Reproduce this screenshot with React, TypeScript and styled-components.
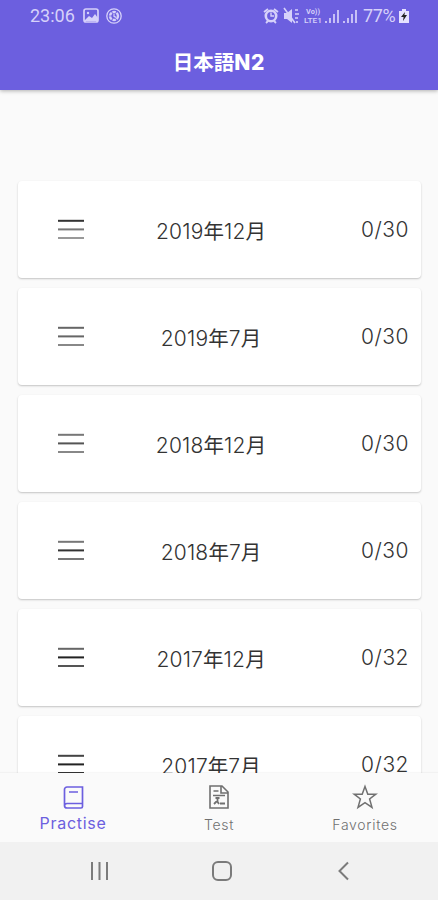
import React from "react";
import styled, { createGlobalStyle } from "styled-components";

const Global = createGlobalStyle`
  * { box-sizing: border-box; }
  body { margin: 0; background: #fafafa; }
`;
const Screen = styled.div`
  width: 438px;
  height: 900px;
  overflow: hidden;
  display: flex;
  flex-direction: column;
  background: #fafafa;
  font-family: Inter, "Noto Sans CJK JP", sans-serif;
`;
const Top = styled.header`
  flex: 0 0 90px;
  background: #6c5fdf;
  color: #fff;
  box-shadow: 0 1px 4px rgba(0, 0, 0, 0.3);
`;
const StatusBar = styled.div`
  height: 32px;
  padding: 0 29px 0 30px;
  display: flex;
  align-items: center;
  color: #d6d1fa;
  font: 18px/32px Roboto, sans-serif;
`;
const Clock = styled.span`
  width: 53px;
`;
const Battery = styled.span`
  width: 36px;
  margin-left: 3px;
  font-size: 18px;
  font-weight: 400;
  letter-spacing: -0.4px;
`;
const Spacer = styled.div`
  flex: 1;
`;
const Title = styled.h1`
  margin: 0;
  height: 58px;
  padding-top: 4px;
  display: flex;
  align-items: center;
  justify-content: center;
  font-size: 20.5px;
  font-weight: 700;
  line-height: 54px;
`;
const TitleLatin = styled.span`
  font-size: 21px;
  font-weight: 800;
  letter-spacing: 0.8px;
`;
const List = styled.main`
  flex: 1;
  min-height: 0;
  overflow: hidden;
  padding: 91px 17px 0 18px;
  display: flex;
  flex-direction: column;
  gap: 10px;
`;
const Card = styled.article`
  flex: 0 0 97px;
  display: grid;
  grid-template-columns: 40px 26px 1fr;
  align-items: center;
  background: #fff;
  border-radius: 4px;
  box-shadow: 0 1px 2px rgba(0, 0, 0, 0.22);
  color: #333;
`;
const MenuIcon = styled.svg`
  grid-column: 2;
  width: 26px;
  height: 22px;
`;
const Content = styled.div`
  display: grid;
  grid-template-columns: 254px 1fr;
  align-items: center;
`;
const Label = styled.span`
  display: flex;
  justify-content: center;
  align-items: baseline;
  padding-top: 2px;
  font-size: 20px;
  line-height: 28px;
`;
const Digits = styled.span`
  font-size: 21px;
  font-weight: 300;
  letter-spacing: 0.2px;
`;
const Kanji = styled.span`
  font-family: "Noto Sans CJK JP", sans-serif;
  font-size: 20.5px;
  font-weight: 400;
`;
const Score = styled.span`
  padding-right: 12px;
  text-align: right;
  white-space: nowrap;
  font-size: 21px;
  font-weight: 300;
  letter-spacing: 0.5px;
  line-height: 28px;
`;
const Tabs = styled.nav`
  flex: 0 0 69px;
  display: grid;
  grid-template-columns: repeat(3, 1fr);
  background: #fafafa;
  box-shadow: 0 -1px 1px rgba(0, 0, 0, 0.03);
`;
const Tab = styled.div<{ $active?: boolean }>`
  display: flex;
  flex-direction: column;
  align-items: center;
  padding-top: 11px;
  color: ${(p) => (p.$active ? "#6c5fdf" : "#707070")};
  font-size: ${(p) => (p.$active ? "16px" : "14px")};
  font-weight: ${(p) => (p.$active ? 400 : 300)};
  letter-spacing: ${(p) => (p.$active ? "0.7px" : "0.7px")};
  line-height: ${(p) => (p.$active ? "26px" : "29px")};
`;
const SystemNav = styled.footer`
  flex: 0 0 58px;
  background: #f1f1f1;
  display: grid;
  grid-template-columns: 20px 22px 14px;
  column-gap: 102px;
  align-items: center;
  padding-left: 89px;
`;

const papers = [
  { year: "2019", month: "12", score: "0/30", tones: ["#333", "#777", "#999"] },
  { year: "2019", month: "7", score: "0/30", tones: ["#666", "#666", "#888"] },
  { year: "2018", month: "12", score: "0/30", tones: ["#777", "#555", "#888"] },
  { year: "2018", month: "7", score: "0/30", tones: ["#777", "#333", "#777"] },
  { year: "2017", month: "12", score: "0/32", tones: ["#666", "#222", "#555"] },
  { year: "2017", month: "7", score: "0/32", tones: ["#444", "#222", "#333"] },
];

const Signal = () => (
  <svg width="18" height="18" viewBox="0 0 18 18" stroke="currentColor" strokeWidth="1.7">
    <path d="M2 16v-2M6 16v-5M10 16V7M14 16V3" />
  </svg>
);

const StatusIcons = () => (
  <>
    <svg width="16" height="18" viewBox="0 0 16 18" fill="none" stroke="currentColor" strokeWidth="1.7">
      <rect x="1" y="2" width="14" height="13" rx="2" />
      <path d="M2 13l4-4 3 2 3-4 3 4v3H2z" fill="currentColor" stroke="none" />
      <circle cx="5" cy="6" r="1.2" fill="currentColor" stroke="none" />
    </svg>
    <svg width="24" height="18" viewBox="-7 0 24 18" fill="none" stroke="currentColor">
      <circle cx="8" cy="9" r="7.2" strokeWidth="1.3" />
      <circle cx="8" cy="9" r="4" strokeWidth="2.4" strokeDasharray="3.4 0.8" />
      <path d="M8 7v2.4l2 1" strokeWidth="1.2" />
    </svg>
    <Spacer />
    <svg width="20" height="18" viewBox="0 0 20 18" fill="none" stroke="currentColor" strokeWidth="1.8">
      <circle cx="8" cy="9" r="5.2" strokeWidth="2.6" />
      <path d="M1 5l4-3M15 5l-4-3M3 16l2-2M13 16l-2-2" />
      <path d="M8 5.5V9h3" strokeWidth="1.4" />
    </svg>
    <svg width="20" height="18" viewBox="0 0 20 18" fill="none" stroke="currentColor" strokeWidth="1.6">
      <path d="M1 6h3l5-4v14l-5-4H1z" fill="currentColor" stroke="none" />
      <path d="M1 1l11 15M12 3h3M12 7h4M12 11h3M14 14v2" />
    </svg>
    <svg width="21" height="18" viewBox="0 0 21 18" fill="currentColor">
      <text x="3" y="7" fontFamily="Roboto" fontWeight="700" fontSize="7" textLength="14" lengthAdjust="spacingAndGlyphs">Vo))</text>
      <text x="1" y="16" fontFamily="Roboto" fontWeight="500" fontSize="8" textLength="18" lengthAdjust="spacingAndGlyphs">LTE1</text>
    </svg>
    <Signal />
    <Signal />
  </>
);

export default function App() {
  return (
    <Screen>
      <Global />
      <Top>
        <StatusBar>
          <Clock>23:06</Clock>
          <StatusIcons />
          <Battery>77%</Battery>
          <svg width="10" height="16" viewBox="0 0 10 16">
            <path d="M3 1h4v2h3v12H0V3h3z" fill="#e5e1ff" />
            <path d="M6 4L2 9h2.6L4 13l4-6H5.4z" fill="#222" />
          </svg>
        </StatusBar>
        <Title>日本語<TitleLatin>N2</TitleLatin></Title>
      </Top>
      <List>
        {papers.map((p) => (
          <Card key={p.year + p.month}>
            <MenuIcon viewBox="0 0 26 22">
              {p.tones.map((tone, i) => (
                <rect key={i} x="0" y={0.8 + i * 8.6} width="26" height="2" fill={tone} />
              ))}
            </MenuIcon>
            <Content>
              <Label>
                <Digits>{p.year}</Digits><Kanji>年</Kanji>
                <Digits>{p.month}</Digits><Kanji>月</Kanji>
              </Label>
              <Score>{p.score}</Score>
            </Content>
          </Card>
        ))}
      </List>
      <Tabs>
        <Tab $active>
          <svg width="24" height="26" viewBox="0 0 24 26" fill="none" stroke="currentColor" strokeWidth="1.7">
            <path d="M21.5 19.5V3H6a2.5 2.5 0 0 0-2.5 2.5v16A2.5 2.5 0 0 0 6 24h14q1.5 0 1.5-1.5v-3H6A2.5 2.5 0 0 0 3.5 22M8 8h9" />
          </svg>
          Practise
        </Tab>
        <Tab>
          <svg width="24" height="26" viewBox="0 0 24 26" fill="none" stroke="currentColor" strokeWidth="1.6">
            <path d="M3 2h12l6 6v16H3zM14 2v7h7M6.5 7h5M6 11.5h12" />
            <path d="M8.5 14h4M10.5 13v5M7 20l3-3 2 3M13 19.5h5" strokeWidth="1.8" />
          </svg>
          Test
        </Tab>
        <Tab>
          <svg width="26" height="26" viewBox="0 0 26 26" fill="none" stroke="currentColor" strokeWidth="1.5">
            <path d="M13 2.5l2.8 7.7h8L17.6 15l2.4 8.4L13 18.7 6 23.4 8.4 15l-6.2-4.8h8z" />
          </svg>
          Favorites
        </Tab>
      </Tabs>
      <SystemNav>
        <svg width="20" height="20" viewBox="0 0 20 20" stroke="#7b7b7b" strokeWidth="2">
          <path d="M3 1v18M10.5 1v18M18 1v18" />
        </svg>
        <svg width="22" height="22" viewBox="0 0 22 22" fill="none" stroke="#7b7b7b" strokeWidth="2">
          <rect x="2" y="2" width="18" height="18" rx="5" />
        </svg>
        <svg width="14" height="20" viewBox="0 0 14 20" fill="none" stroke="#7b7b7b" strokeWidth="2">
          <path d="M13 1.5L4.5 10l8.5 8.5" />
        </svg>
      </SystemNav>
    </Screen>
  );
}
